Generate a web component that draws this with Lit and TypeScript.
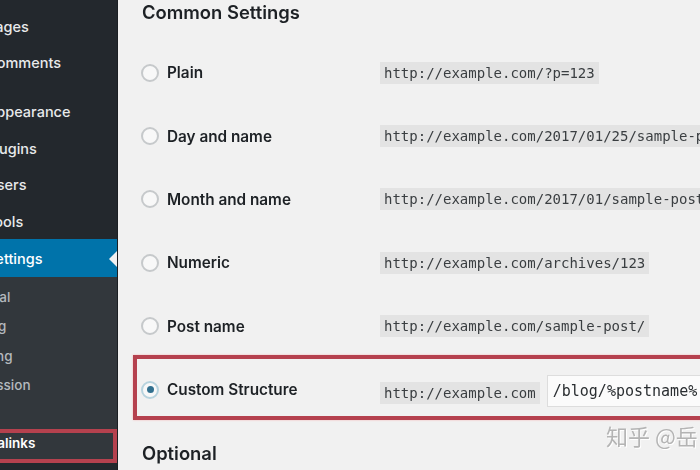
import { LitElement, html, css } from "lit";
import { customElement } from "lit/decorators.js";

const TOP_MENU = [
  { label: "Pages", group: "a" },
  { label: "Comments", group: "a" },
  { label: "Appearance", group: "b" },
  { label: "Plugins", group: "a" },
  { label: "Users", group: "a" },
  { label: "Tools", group: "a" },
];

const SUB_MENU = ["General", "Writing", "Reading", "Discussion", "Media"];

const ROWS = [
  { label: "Plain", url: "http://example.com/?p=123" },
  { label: "Day and name", url: "http://example.com/2017/01/25/sample-post/" },
  { label: "Month and name", url: "http://example.com/2017/01/sample-post/" },
  { label: "Numeric", url: "http://example.com/archives/123" },
  { label: "Post name", url: "http://example.com/sample-post/" },
];

@customElement("app-root")
export class AppRoot extends LitElement {
  static styles = css`
    :host {
      display: block;
      position: relative;
      width: 700px;
      height: 470px;
      overflow: hidden;
      background: #f1f1f1;
      font-family: Inter, "Liberation Sans", sans-serif;
    }

    .page {
      display: flex;
      height: 470px;
      filter: blur(0.5px);
    }

    .sidebar {
      flex: 0 0 118px;
      display: flex;
      flex-direction: column;
      padding-top: 8.3px;
      overflow: hidden;
      background: #23282d;
      color: #e8eaeb;
      font-size: 14.5px;
      font-weight: 500;
      box-sizing: border-box;
      border-right: 1px solid #1b1f23;
    }

    .item {
      flex: 0 0 36.4px;
      display: flex;
      align-items: center;
      white-space: nowrap;
    }

    .item span {
      margin-left: -14px;
    }

    .item.gap {
      margin-top: 12.6px;
    }

    .item.current {
      position: relative;
      flex-basis: 38px;
      background: #0073aa;
      color: #fff;
    }

    .item.current::after {
      content: "";
      position: absolute;
      right: 0;
      top: 12px;
      border: 8px solid transparent;
      border-right-color: #f1f1f1;
      border-left-width: 0;
    }

    .submenu {
      flex: 0 0 186px;
      display: flex;
      flex-direction: column;
      padding-top: 5px;
      box-sizing: border-box;
      background: #32373c;
      color: #b4b9be;
      font-size: 13.5px;
    }

    .sub {
      flex: 0 0 29.4px;
      display: flex;
      align-items: center;
      position: relative;
      white-space: nowrap;
    }

    .sub span {
      margin-left: -40px;
    }

    .sub.active {
      color: #fff;
      font-weight: 600;
    }

    .sub.active span {
      margin-left: -37px;
      margin-top: -2px;
    }

    .sub.active::after {
      content: "";
      position: absolute;
      left: -4px;
      right: 0;
      top: 0;
      bottom: -4px;
      border: 4px solid #b5414e;
    }

    .main {
      flex: 1;
      min-width: 0;
      padding-left: 24px;
      color: #1d2125;
    }

    h2 {
      margin: 0;
      height: 41px;
      padding-top: 1px;
      box-sizing: border-box;
      font-size: 18.4px;
      line-height: 22px;
      font-weight: 600;
    }

    h2.optional {
      height: auto;
      padding-top: 21px;
    }

    .row {
      position: relative;
      height: 63.4px;
      margin-left: -1px;
      display: flex;
      align-items: center;
      white-space: nowrap;
    }

    .row.custom::after {
      content: "";
      position: absolute;
      left: -8px;
      right: -40px;
      top: -3px;
      bottom: 1px;
      border: 4px solid #b5414e;
      box-shadow: 0 0 2px #f4b9b9;
      pointer-events: none;
    }

    .radio {
      flex: 0 0 auto;
      width: 18px;
      height: 18px;
      display: flex;
      align-items: center;
      justify-content: center;
      box-sizing: border-box;
      border: 2px solid #c6c9cb;
      border-radius: 50%;
      background: #f8f8f8;
    }

    .custom .radio {
      border-color: #b7d3de;
    }

    .radio i {
      width: 7px;
      height: 7px;
      border-radius: 50%;
      background: #31708f;
    }

    .label {
      flex: 0 0 213px;
      margin-left: 8px;
      font-size: 15.3px;
      font-weight: 600;
    }

    code {
      padding: 3px 4px;
      background: #e3e3e3;
      color: #3a3e41;
      font-family: "DejaVu Sans Mono", "Liberation Mono", monospace;
      font-size: 14px;
      line-height: 16px;
    }

    .custom code {
      margin-top: 6px;
    }

    .input {
      flex: 0 0 auto;
      width: 180px;
      height: 32px;
      margin-top: 3px;
      margin-left: 7px;
      padding-left: 5px;
      box-sizing: border-box;
      display: flex;
      align-items: center;
      background: #fbfbfb;
      border: 1px solid #ddd;
      color: #2a2e31;
      font-family: "DejaVu Sans Mono", "Liberation Mono", monospace;
      font-size: 15px;
    }

    .watermark {
      position: absolute;
      left: 606px;
      top: 421px;
      color: #b4b4b4;
      font-family: "Noto Sans CJK SC", sans-serif;
      font-size: 22px;
      line-height: 28px;
      white-space: nowrap;
      text-shadow: 1px 1px 0 #fff;
    }
  `;

  private _radio(checked = false) {
    return html`<div class="radio">${checked ? html`<i></i>` : ""}</div>`;
  }

  render() {
    return html`
      <div class="page">
        <nav class="sidebar">
          ${TOP_MENU.map(
            (m) =>
              html`<div class="item ${m.group === "b" ? "gap" : ""}"><span>${m.label}</span></div>`
          )}
          <div class="item current"><span>Settings</span></div>
          <div class="submenu">
            ${SUB_MENU.map((s) => html`<div class="sub"><span>${s}</span></div>`)}
            <div class="sub active"><span>Permalinks</span></div>
          </div>
        </nav>
        <main class="main">
          <h2>Common Settings</h2>
          ${ROWS.map(
            (r) => html`
              <div class="row">
                ${this._radio()}
                <div class="label">${r.label}</div>
                <code>${r.url}</code>
              </div>
            `
          )}
          <div class="row custom">
            ${this._radio(true)}
            <div class="label">Custom Structure</div>
            <code>http://example.com</code>
            <div class="input">/blog/%postname%</div>
          </div>
          <h2 class="optional">Optional</h2>
        </main>
      </div>
      <div class="watermark">知乎 @岳</div>
    `;
  }
}
